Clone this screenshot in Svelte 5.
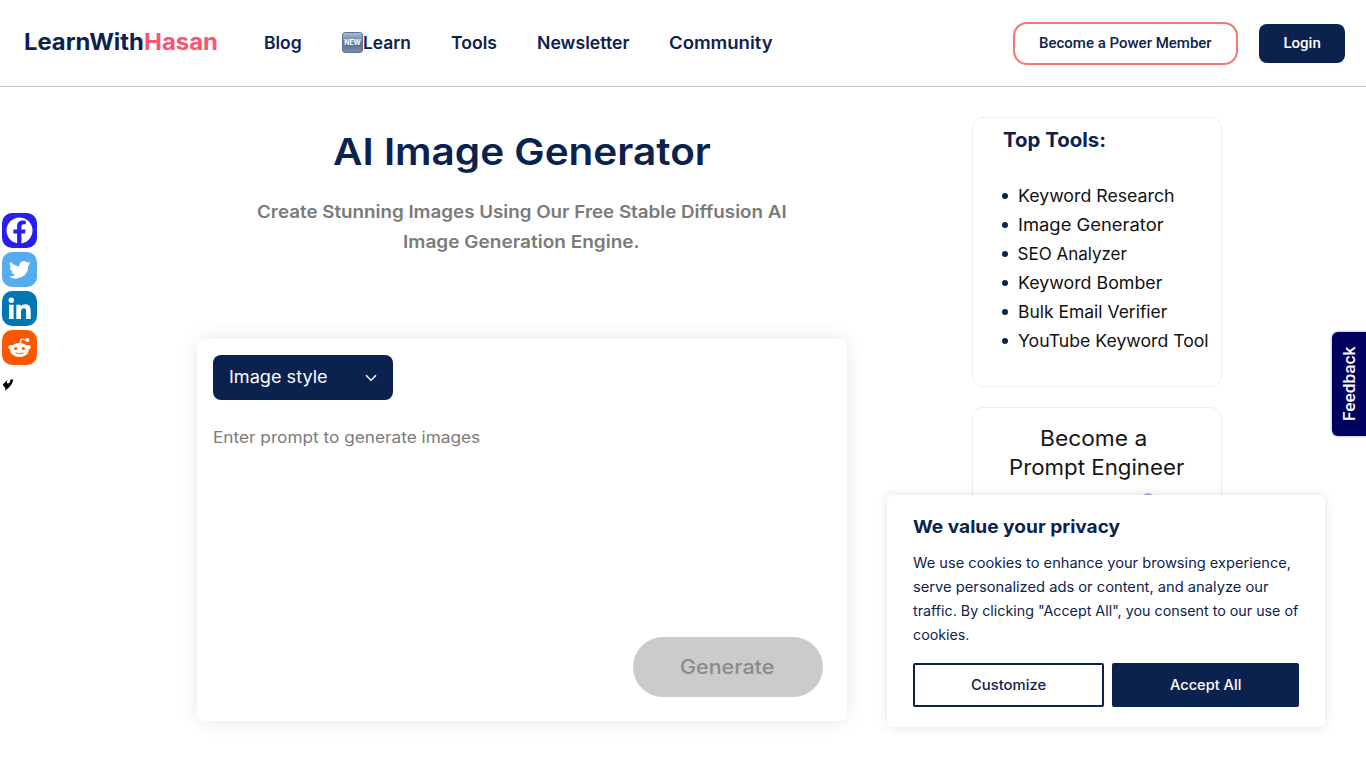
<script>
  const nav = [
    { label: 'Blog', width: 38 },
    { label: 'Learn', width: 48, isNew: true },
    { label: 'Tools', width: 45.5 },
    { label: 'Newsletter', width: 92.5 },
    { label: 'Community', width: 103.5 }
  ];
  const tools = [
    ['Keyword Research', 156.5],
    ['Image Generator', 146],
    ['SEO Analyzer', 109],
    ['Keyword Bomber', 144.5],
    ['Bulk Email Verifier', 149],
    ['YouTube Keyword Tool', 191]
  ];
  const notice = [
    ['We use cookies to enhance your browsing experience,', 378],
    ['serve personalized ads or content, and analyze our', 356],
    ['traffic. By clicking "Accept All", you consent to our use of', 385.5],
    ['cookies.', 56]
  ];

  // Widens the letters of a line so that it fills the given width.
  function fit(node, width) {
    const natural = node.offsetWidth;
    node.style.width = `${width}px`;
    node.style.transform = `scaleX(${(width / natural).toFixed(4)})`;
  }
</script>

<div class="page">
  <header>
    <a class="logo" href="#home"><span class="t" use:fit={119.5}>LearnWith</span><span class="t pink" use:fit={74.5}>Hasan</span></a>
    <nav>
      {#each nav as item}
        <a href="#nav">{#if item.isNew}<i class="new">NEW</i>{/if}<span class="t" use:fit={item.width}>{item.label}</span></a>
      {/each}
    </nav>
    <a class="member" href="#member"><span class="v" use:fit={173}>Become a Power Member</span></a>
    <a class="login" href="#login"><span class="v" use:fit={37}>Login</span></a>
  </header>

  <div class="body">
    <main>
      <h1><span class="t" use:fit={378}>AI Image Generator</span></h1>
      <h2>
        <span class="t" use:fit={530}>Create Stunning Images Using Our Free Stable Diffusion AI</span>
        <span class="t" use:fit={237}>Image Generation Engine.</span>
      </h2>
      <section class="generator">
        <button class="style">
          <span class="t" use:fit={99}>Image style</span>
          <svg width="12" height="8" viewBox="0 0 12 8"><path d="M1 1.2 6 6.2 11 1.2" fill="none" stroke="#fff" stroke-width="1.5" /></svg>
        </button>
        <div class="prompt"><span class="t" use:fit={267}>Enter prompt to generate images</span></div>
        <button class="generate"><span class="t" use:fit={94.5}>Generate</span></button>
      </section>
    </main>

    <aside>
      <section class="card tools">
        <h3><span class="t" use:fit={103}>Top Tools:</span></h3>
        <ul>
          {#each tools as [name, width]}
            <li><span class="t" use:fit={width}>{name}</span></li>
          {/each}
        </ul>
      </section>
      <section class="card promo">
        <div><span class="t" use:fit={107}>Become a</span></div>
        <div><span class="t" use:fit={175}>Prompt Engineer</span></div>
        <i class="orb"></i>
      </section>
    </aside>
  </div>

  <div class="social">
    <svg viewBox="0 0 35 35"><rect width="35" height="35" rx="10" fill="#2a1df0" /><circle cx="17.5" cy="17.5" r="13" fill="#fff" /><path d="M15.1 31V20.6h-3.7v-4h3.7v-3.1c0-4 2.3-6 5.8-6 1.3 0 2.5.2 2.9.3v3.5h-2.1c-1.9 0-2.3 1-2.3 2.3v3h4.2l-.7 4h-3.5V31z" fill="#2a1df0" /></svg>
    <svg viewBox="0 0 35 35"><rect width="35" height="35" rx="10" fill="#55acee" /><path d="M28.5 11.1a9 9 0 0 1-2.5.7 4.4 4.4 0 0 0 1.9-2.4 8.9 8.9 0 0 1-2.8 1.1 4.4 4.4 0 0 0-7.5 4A12.5 12.5 0 0 1 8.500 9.800a4.400 4.400 0 0 0 1.400 5.900 4.400 4.400 0 0 1-2-.6v.1a4.400 4.400 0 0 0 3.500 4.300 4.400 4.400 0 0 1-2 .1 4.400 4.400 0 0 0 4.100 3 8.900 8.900 0 0 1-6.500 1.900A12.500 12.500 0 0 0 26.300 13.400a9 9 0 0 0 2.200-2.300z" fill="#fff" /></svg>
    <svg viewBox="0 0 35 35"><rect width="35" height="35" rx="10" fill="#0077b5" /><g fill="#fff"><circle cx="9.3" cy="9.2" r="2.7" /><path d="M7 13.700h4.600V28H7zM14.300 13.700h4.400v2c.6-1.200 2.200-2.400 4.500-2.400 4.700 0 5.500 3 5.500 7V28h-4.600v-7c0-1.700 0-3.800-2.300-3.800S19 19 19 20.900V28h-4.700z" /></g></svg>
    <svg viewBox="0 0 35 35"><rect width="35" height="35" rx="10" fill="#ff5700" /><g fill="#fff"><ellipse cx="17.5" cy="20" rx="9.3" ry="7" /><circle cx="8.6" cy="17.200" r="2.300" /><circle cx="26.400" cy="17.200" r="2.300" /><circle cx="25.300" cy="10" r="2.100" /></g><path d="m18 14 1.300-5 4.600 1" fill="none" stroke="#fff" stroke-width="1.200" /><circle cx="13.700" cy="18.500" r="1.500" fill="#ff5700" /><circle cx="21.300" cy="18.500" r="1.500" fill="#ff5700" /><path d="M14 23q3.500 2 7 0" fill="none" stroke="#ff5700" stroke-width="1" stroke-linecap="round" /></svg>
    <svg class="more" viewBox="0 0 12 12"><path d="M.8 5.500 5.400 1 4.700 4l1.300.500L8 3.200 8.300.8 11.300.3 10 4.800 7 8.400 3 11.700l.5-3.100-1-.2z" fill="#000" /></svg>
  </div>

  <div class="feedback"><div class="turn"><span class="v" use:fit={74}>Feedback</span></div></div>

  <div class="consent">
    <h4><span class="t" use:fit={207}>We value your privacy</span></h4>
    <div class="notice">
      {#each notice as [line, width]}
        <div><span class="t" use:fit={width}>{line}</span></div>
      {/each}
    </div>
    <div class="actions">
      <button class="customize"><span class="t" use:fit={75}>Customize</span></button>
      <button class="accept"><span class="t" use:fit={71}>Accept All</span></button>
    </div>
  </div>
</div>

<style>
  :global(body) {
    margin: 0;
    background: #fff;
    overflow: hidden;
  }
  .page {
    position: relative;
    height: 768px;
    overflow: hidden;
    font-family: Inter, sans-serif;
    color: #0c224e;
  }
  .page * {
    box-sizing: border-box;
  }
  .t, .v {
    display: inline-block;
    white-space: nowrap;
    text-align: left;
    transform-origin: 0 50%;
  }
  .v { font-family: Roboto, sans-serif; }
  a { color: inherit; text-decoration: none; }
  button { font: inherit; border: 0; padding: 0; margin: 0; }
  h1, h2, h3, h4, ul { margin: 0; padding: 0; }

  header {
    display: flex;
    align-items: center;
    height: 87px;
    padding: 0 21px 0 24px;
    border-bottom: 1px solid #c4c4c4;
  }
  .logo {
    display: flex;
    width: 240px;
    font-size: 22.5px;
    font-weight: 700;
    line-height: 28px;
    padding-bottom: 3px;
  }
  .pink { color: #fb5471; }
  nav {
    display: flex;
    gap: 40px;
    flex: 1;
    font-size: 17px;
    font-weight: 600;
    line-height: 24px;
  }
  nav a { display: flex; align-items: center; }
  .new {
    width: 21px;
    height: 21px;
    margin-top: -1px;
    border-radius: 3px;
    border: 1px solid #60768e;
    background: linear-gradient(#a9bfd2 0, #7f9ab4 25%, #58728f 60%, #768da5 100%);
    color: #fff;
    font: 700 7px/19px Inter, sans-serif;
    letter-spacing: -0.2px;
    text-align: center;
  }
  .member, .login {
    display: flex;
    align-items: center;
    justify-content: center;
    font-size: 15px;
    font-weight: 500;
  }
  .member {
    width: 225px;
    height: 43px;
    border: 2px solid #ee7b6c;
    border-radius: 14px;
    margin-right: 21px;
  }
  .login {
    width: 86px;
    height: 39px;
    border-radius: 8px;
    background: #0c224e;
    color: #fff;
  }

  .body {
    display: flex;
    padding-left: 196.5px;
    gap: 125px;
  }
  main { width: 650px; text-align: center; }
  h1 {
    margin-top: 41px;
    font-size: 37.5px;
    font-weight: 600;
    line-height: 48px;
  }
  h2 {
    display: flex;
    flex-direction: column;
    align-items: center;
    margin-top: 21px;
    font-size: 17.5px;
    font-weight: 600;
    line-height: 30px;
    color: #7a7a7a;
  }
  .generator {
    display: flex;
    flex-direction: column;
    align-items: flex-start;
    height: 382px;
    margin-top: 82px;
    padding: 16px 24px 24px 16px;
    border-radius: 8px;
    box-shadow: 0 0 20px rgba(0, 0, 0, 0.1);
  }
  .style {
    display: flex;
    align-items: center;
    justify-content: space-between;
    width: 180px;
    height: 45px;
    padding: 0 16px;
    border-radius: 8px;
    background: #0c224e;
    color: #fff;
    font-size: 17px;
  }
  .style .t { margin-top: -1px; }
  .prompt {
    flex: 1;
    padding-top: 25px;
    font-size: 16px;
    line-height: 24px;
    color: #7b7b7b;
  }
  .generate {
    align-self: flex-end;
    width: 190px;
    height: 60px;
    border-radius: 30px;
    background: #cbcbcb;
    color: #8a8a8a;
    font-size: 20px;
    font-weight: 500;
  }

  aside {
    display: flex;
    flex-direction: column;
    gap: 20px;
    width: 250px;
    padding-top: 30px;
  }
  .card {
    border: 1px solid #eee;
    border-radius: 11px;
  }
  .tools { height: 269.5px; padding: 8px 0 0 30px; }
  h3 {
    font-size: 20px;
    font-weight: 700;
    line-height: 28px;
    height: 28px;
  }
  ul { list-style: none; margin-top: 27px; color: #111; }
  li {
    display: flex;
    align-items: center;
    gap: 10px;
    height: 29px;
    font-size: 17px;
  }
  li::before {
    content: '';
    width: 6px;
    height: 6px;
    margin-left: -1px;
    border-radius: 50%;
    background: #0c224e;
  }
  .promo {
    height: 300px;
    padding-top: 16px;
    text-align: center;
    font-size: 21.5px;
    line-height: 29px;
    color: #161616;
  }
  .promo div:first-child { margin-right: 7px; }
  .orb {
    display: block;
    width: 14px;
    height: 14px;
    margin: 11px 0 0 168px;
    border: 2px solid #b9aef2;
    border-radius: 50%;
  }

  .social {
    position: absolute;
    left: 2px;
    top: 213px;
    display: flex;
    flex-direction: column;
    gap: 4px;
  }
  .social svg { width: 35px; height: 35px; }
  .social .more { width: 12px; height: 12px; margin: 10px 0 0 0; }

  .feedback {
    position: absolute;
    right: 0;
    top: 332px;
    display: flex;
    align-items: center;
    justify-content: center;
    width: 34px;
    height: 104px;
    border-radius: 6px 0 0 6px;
    background: #00005f;
    box-shadow: 0 0 2px 1px #c9c9de;
    color: #fff;
    font-size: 17px;
    font-weight: 500;
  }
  .turn { flex: none; transform: rotate(-90deg); }

  .consent {
    position: absolute;
    left: 887px;
    top: 495px;
    width: 438px;
    height: 232px;
    padding: 18px 26px 20px;
    border-radius: 6px;
    background: #fff;
    box-shadow: 0 0 12px rgba(0, 0, 0, 0.12);
  }
  h4 { font-size: 18px; font-weight: 700; line-height: 28px; height: 28px; }
  .notice { margin-top: 10px; font-size: 14px; line-height: 24px; }
  .notice div { height: 24px; }
  .actions { display: flex; gap: 8px; margin-top: 16px; }
  .actions button {
    height: 44px;
    padding-bottom: 1px;
    border: 2px solid #0c224e;
    border-radius: 2px;
    font-size: 14px;
    font-weight: 500;
  }
  .customize { width: 191px; background: #fff; color: #0c224e; }
  .accept { width: 187px; background: #0c224e; color: #fff; }
</style>
